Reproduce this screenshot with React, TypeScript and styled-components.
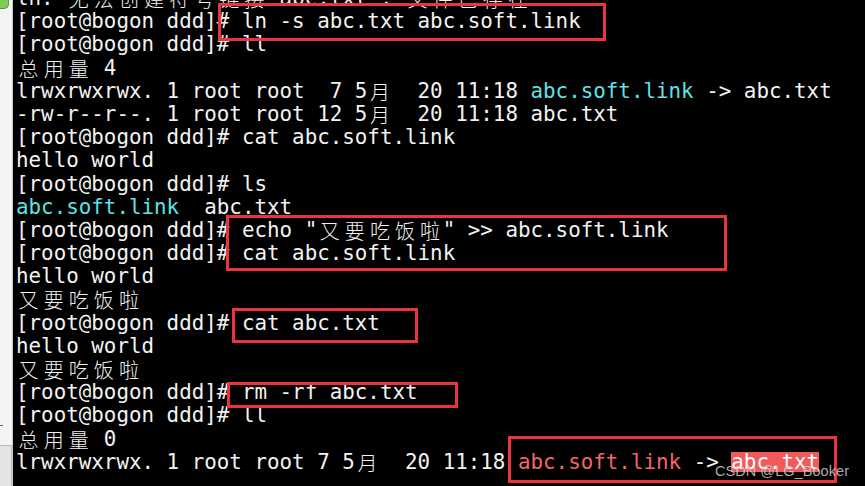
import React from "react";
import styled, { createGlobalStyle } from "styled-components";

const CELL = 12.55;
const LINE_H = 23.2;

const Global = createGlobalStyle`
  html, body { margin: 0; padding: 0; background: #000; }
  body { overflow: hidden; }
  #root { width: 865px; height: 486px; }
`;

const Screen = styled.div`
  position: relative;
  display: flex;
  width: 865px;
  height: 486px;
  overflow: hidden;
  background: #000;
`;

const SideStrip = styled.div`
  width: 12px;
  flex: none;
  display: flex;
  flex-direction: column;
  background: #f4f4f4;
  border-right: 1px solid #c9c9c9;
`;

const StatusDot = styled.div`
  width: 8px;
  height: 10px;
  margin-top: -2px;
  border-radius: 0 0 5px 0;
  background: #7ccf55;
  border: 1px solid #4e9a32;
  border-left: none;
  border-top: none;
`;

const StripSpacer = styled.div`
  flex: 1;
`;

const StripDash = styled.div`
  width: 3px;
  height: 1px;
  background: #666;
  margin-bottom: 19px;
`;

const StripBox = styled.div`
  height: 40px;
  background: #e3e3e3;
  border-top: 1px solid #b9b9b9;
  border-right: 1px solid #b9b9b9;
`;

const Terminal = styled.div`
  flex: 1;
  overflow: hidden;
  padding-left: 3px;
  font-family: "DejaVu Sans Mono", "Noto Sans CJK SC", monospace;
  font-size: 20.85px;
  color: #f2f2f2;
`;

const Lines = styled.div`
  margin-top: -13px;
`;

const Line = styled.div`
  height: ${LINE_H}px;
  line-height: ${LINE_H}px;
  white-space: pre;
`;

const Wide = styled.span`
  display: inline-block;
  width: ${CELL * 2}px;
  text-align: center;
  font-family: "Noto Sans CJK SC", sans-serif;
  font-size: 20px;
  font-weight: 300;
  line-height: ${LINE_H}px;
  vertical-align: top;
`;

const Span = styled.span<{ $tone?: "cyan" | "red" | "alert" }>`
  color: ${(p) =>
    p.$tone === "cyan" ? "#5ee2e6" : p.$tone === "red" ? "#f26666" : p.$tone === "alert" ? "#ffffff" : "inherit"};
  ${(p) =>
    p.$tone === "alert"
      ? `background: #f25a5a; display: inline-block; height: 20px; line-height: 20px;`
      : ""}
`;

const Box = styled.div`
  position: absolute;
  box-sizing: border-box;
  border: 3px solid #ea353d;
  pointer-events: none;
`;

const Watermark = styled.div`
  position: absolute;
  right: 16px;
  bottom: 7px;
  font-family: "Liberation Sans", Arial, sans-serif;
  font-size: 14.6px;
  color: rgba(205, 205, 205, 0.85);
  white-space: pre;
`;

const isWide = (ch: string) => /[\u2E80-\u9FFF\uF900-\uFAFF\uFF00-\uFF60]/.test(ch);

function cells(text: string): React.ReactNode[] {
  const out: React.ReactNode[] = [];
  let buf = "";
  let k = 0;
  for (const ch of Array.from(text)) {
    if (isWide(ch)) {
      if (buf) out.push(buf);
      buf = "";
      out.push(<Wide key={k++}>{ch}</Wide>);
    } else {
      buf += ch;
    }
  }
  if (buf) out.push(buf);
  return out;
}

type Seg = { t: string; tone?: "cyan" | "red" | "alert" };
const P = "[root@bogon ddd]# ";

const lines: Seg[][] = [
  [{ t: 'ln: 无法创建符号链接"abc.txt": 文件已存在' }],
  [{ t: P + "ln -s abc.txt abc.soft.link" }],
  [{ t: P + "ll" }],
  [{ t: "总用量 4" }],
  [
    { t: "lrwxrwxrwx. 1 root root  7 5月  20 11:18 " },
    { t: "abc.soft.link", tone: "cyan" },
    { t: " -> abc.txt" },
  ],
  [{ t: "-rw-r--r--. 1 root root 12 5月  20 11:18 abc.txt" }],
  [{ t: P + "cat abc.soft.link" }],
  [{ t: "hello world" }],
  [{ t: P + "ls" }],
  [{ t: "abc.soft.link", tone: "cyan" }, { t: "  abc.txt" }],
  [{ t: P + 'echo "又要吃饭啦" >> abc.soft.link' }],
  [{ t: P + "cat abc.soft.link" }],
  [{ t: "hello world" }],
  [{ t: "又要吃饭啦" }],
  [{ t: P + "cat abc.txt" }],
  [{ t: "hello world" }],
  [{ t: "又要吃饭啦" }],
  [{ t: P + "rm -rf abc.txt" }],
  [{ t: P + "ll" }],
  [{ t: "总用量 0" }],
  [
    { t: "lrwxrwxrwx. 1 root root 7 5月  20 11:18 " },
    { t: "abc.soft.link", tone: "red" },
    { t: " -> " },
    { t: "abc.txt", tone: "alert" },
  ],
];

const boxes = [
  { left: 218, top: 3, width: 388, height: 38 },
  { left: 226, top: 215, width: 501, height: 56 },
  { left: 232, top: 308, width: 186, height: 35 },
  { left: 227, top: 382, width: 231, height: 26 },
  { left: 508, top: 436, width: 329, height: 47 },
];

export default function App() {
  return (
    <>
      <Global />
      <Screen>
        <SideStrip>
          <StatusDot />
          <StripSpacer />
          <StripDash />
          <StripBox />
        </SideStrip>
        <Terminal>
          <Lines>
            {lines.map((segs, i) => (
              <Line key={i}>
                {segs.map((s, j) => (
                  <Span key={j} $tone={s.tone}>
                    {cells(s.t)}
                  </Span>
                ))}
              </Line>
            ))}
          </Lines>
        </Terminal>
        {boxes.map((b, i) => (
          <Box key={i} style={b} />
        ))}
        <Watermark>CSDN @LG_Booker</Watermark>
      </Screen>
    </>
  );
}
